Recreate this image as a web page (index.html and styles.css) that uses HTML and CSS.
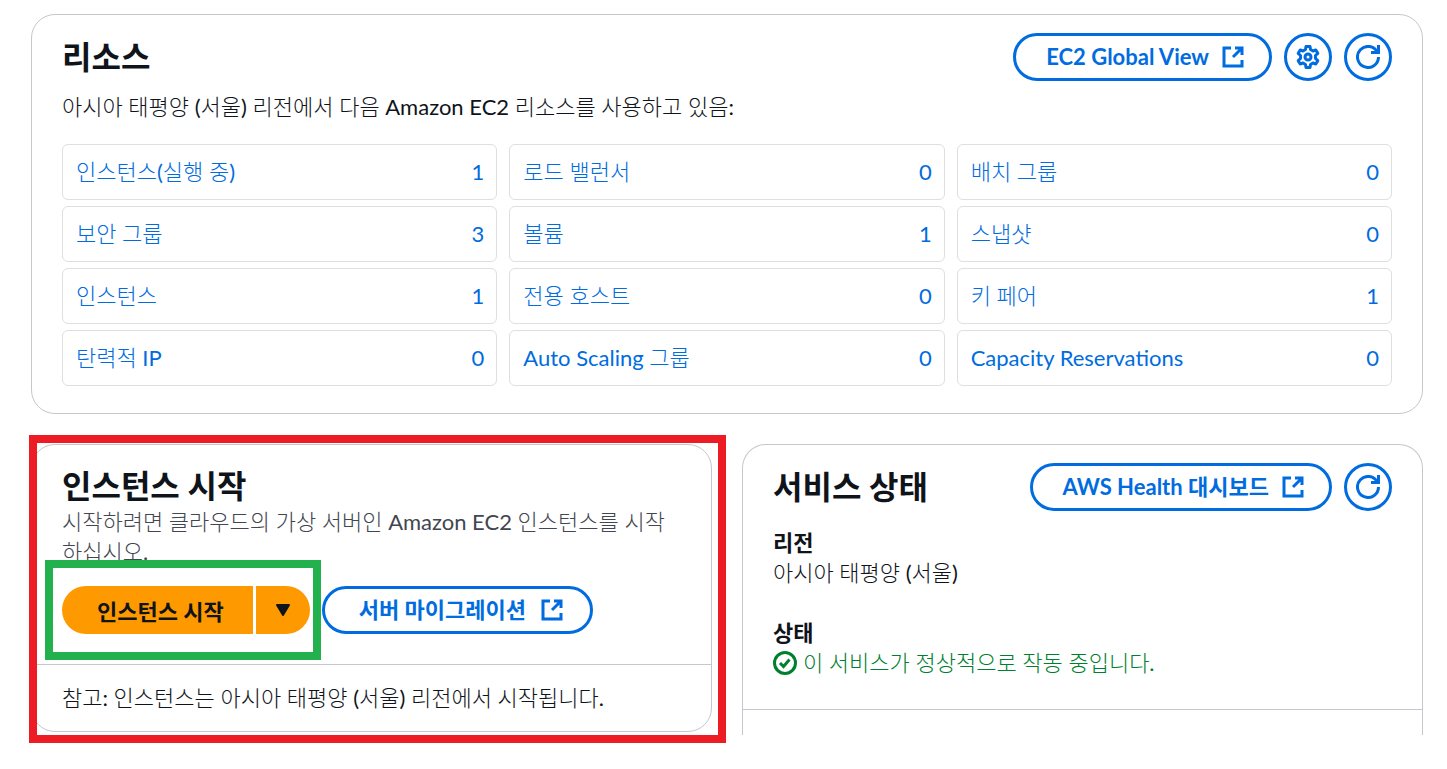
FILE: index.html
```html
<!DOCTYPE html>
<html lang="ko">
<head>
  <meta charset="UTF-8" />
  <meta name="viewport" content="width=device-width, initial-scale=1.0" />
  <title>EC2 대시보드</title>
  <link rel="stylesheet" href="styles.css">
</head>
<body>
  <!-- Shared icons -->
  <svg class="sprite" aria-hidden="true">
    <symbol id="icon-external" viewBox="0 0 24 24">
      <path d="M10 3H3v18h18v-6M14 3h7v7M20.500 3.500L12 12" />
    </symbol>
    <symbol id="icon-refresh" viewBox="0 0 24 24">
      <path d="M22.500 12A10.500 10.500 0 1 1 21.500 7.500M22.500 0v7.500H15" />
    </symbol>
    <symbol id="icon-gear" viewBox="0 0 24 24">
      <path stroke-linejoin="round" d="M9.500 4.500L10 1.500h4L14.500 4.500l2.500 1.500 2.800-1 2 3.300L19.500 10.500v3l2.300 2.200-2 3.300-2.800-1-2.500 1.500-.5 3h-4l-.5-3L7 18l-2.800 1-2-3.300L4.500 13.500v-3L2.200 8.300l2-3.300L7 6z" />
      <circle cx="12" cy="12" r="3" />
    </symbol>
    <symbol id="icon-check" viewBox="0 0 24 24">
      <circle cx="12" cy="12" r="10.500" />
      <path d="M7 12l3.500 3.500L16.500 8.500" />
    </symbol>
  </svg>

  <main class="dashboard">
    <section class="card resources">
      <div class="card-header">
        <h2>리소스</h2>
        <div class="actions">
          <a class="btn" href="#">EC2 Global View <svg class="icon"><use href="#icon-external" /></svg></a>
          <button class="btn btn-round" aria-label="설정"><svg class="icon"><use href="#icon-gear" /></svg></button>
          <button class="btn btn-round" aria-label="새로 고침"><svg class="icon"><use href="#icon-refresh" /></svg></button>
        </div>
      </div>
      <p class="intro">아시아 태평양 (서울) 리전에서 다음 Amazon EC2 리소스를 사용하고 있음:</p>
      <div class="resource-grid">
        <a class="resource" href="#"><span>인스턴스(실행 중)</span><span>1</span></a>
        <a class="resource" href="#"><span>로드 밸런서</span><span>0</span></a>
        <a class="resource" href="#"><span>배치 그룹</span><span>0</span></a>
        <a class="resource" href="#"><span>보안 그룹</span><span>3</span></a>
        <a class="resource" href="#"><span>볼륨</span><span>1</span></a>
        <a class="resource" href="#"><span>스냅샷</span><span>0</span></a>
        <a class="resource" href="#"><span>인스턴스</span><span>1</span></a>
        <a class="resource" href="#"><span>전용 호스트</span><span>0</span></a>
        <a class="resource" href="#"><span>키 페어</span><span>1</span></a>
        <a class="resource" href="#"><span>탄력적 IP</span><span>0</span></a>
        <a class="resource" href="#"><span>Auto Scaling 그룹</span><span>0</span></a>
        <a class="resource" href="#"><span>Capacity Reservations</span><span>0</span></a>
      </div>
    </section>

    <div class="columns">
      <section class="card launch">
        <div class="launch-body">
          <h2>인스턴스 시작</h2>
          <p class="description">시작하려면 클라우드의 가상 서버인 Amazon EC2 인스턴스를 시작하십시오.</p>
          <div class="actions">
            <div class="split-button">
              <button class="btn-primary">인스턴스 시작</button>
              <button class="btn-primary btn-caret" aria-label="추가 옵션">
                <svg class="caret" viewBox="0 0 16 12"><path d="M2 1h12L8 11z" /></svg>
              </button>
            </div>
            <a class="btn btn-wide" href="#">서버 마이그레이션 <svg class="icon"><use href="#icon-external" /></svg></a>
          </div>
        </div>
        <p class="card-footer">참고: 인스턴스는 아시아 태평양 (서울) 리전에서 시작됩니다.</p>
      </section>

      <section class="card health">
        <div class="card-header">
          <h2>서비스 상태</h2>
          <div class="actions">
            <a class="btn" href="#">AWS Health 대시보드 <svg class="icon"><use href="#icon-external" /></svg></a>
            <button class="btn btn-round" aria-label="새로 고침"><svg class="icon"><use href="#icon-refresh" /></svg></button>
          </div>
        </div>
        <dl class="status-list">
          <div>
            <dt>리전</dt>
            <dd>아시아 태평양 (서울)</dd>
          </div>
          <div>
            <dt>상태</dt>
            <dd class="status-ok"><svg class="icon"><use href="#icon-check" /></svg>이 서비스가 정상적으로 작동 중입니다.</dd>
          </div>
        </dl>
        <div class="health-footer"></div>
      </section>
    </div>
  </main>
</body>
</html>
```

FILE: styles.css
```css
* {
  box-sizing: border-box;
}
body {
  margin: 0;
  padding: 14px 24px 34px 31px;
  background: #fff;
  color: #0f141a;
  font-family: Lato, "Noto Sans CJK KR Light", "Noto Sans CJK KR", sans-serif;
  font-size: 22px;
  line-height: 30px;
}
h2, p, dl, dd {
  margin: 0;
}
h2, dt, .btn, .btn-primary {
  font-family: Lato, "Noto Sans CJK KR", sans-serif;
  font-size: 22px;
  font-weight: bold;
}
h2 {
  font-size: 32px;
  line-height: 38px;
}
a {
  text-decoration: none;
}
.sprite {
  display: none;
}
.dashboard {
  display: flex;
  flex-direction: column;
  gap: 30px;
}
.card {
  border: 1px solid #c6c6cd;
  border-radius: 24px;
}
.card-header {
  display: flex;
  align-items: center;
  justify-content: space-between;
}
.actions {
  display: flex;
  align-items: center;
  gap: 12px;
}

/* Buttons */
.btn {
  display: flex;
  align-items: center;
  justify-content: center;
  gap: 12px;
  height: 48px;
  padding: 0 24px 0 30px;
  border: 3px solid #006ce0;
  border-radius: 24px;
  background: #fff;
  color: #006ce0;
  white-space: nowrap;
}
.btn-wide {
  gap: 14px;
  padding: 0 26px 0 34px;
}
.btn-round {
  width: 48px;
  padding: 0;
}
.icon {
  flex: none;
  width: 24px;
  height: 24px;
  fill: none;
  stroke: currentColor;
  stroke-width: 3px;
}
.btn-primary {
  height: 48px;
  padding: 0 29px 0 35px;
  border: none;
  border-radius: 24px 0 0 24px;
  background: #ff9900;
  color: #0f141a;
}
.btn-caret {
  width: 54px;
  padding: 0;
  border-radius: 0 24px 24px 0;
}
.caret {
  display: block;
  width: 16px;
  height: 12px;
  margin: 0 auto;
  fill: #0f141a;
  stroke: #0f141a;
  stroke-width: 2px;
  stroke-linejoin: round;
}

/* Resources */
.resources {
  padding: 18px 30px 27px;
}
.intro {
  margin: 11px 0 22px;
}
.resource-grid {
  display: grid;
  grid-template-columns: repeat(3, 1fr);
  gap: 6px 12px;
}
.resource {
  display: flex;
  align-items: center;
  justify-content: space-between;
  height: 56px;
  padding: 0 12px 0 13px;
  border: 1px solid #dedee3;
  border-radius: 6px;
  color: #006ce0;
}

/* Launch and health cards */
.columns {
  display: grid;
  grid-template-columns: 1fr 1fr;
  align-items: start;
  gap: 30px;
}
.launch {
  position: relative;
}
.launch-body {
  padding: 22px 30px 30px;
}
.description {
  margin: 2px 0 19px;
  color: #424650;
  word-break: break-all;
}
.card-footer {
  padding: 18px 30px;
  border-top: 1px solid #c6c6cd;
}
.split-button {
  position: relative;
  display: flex;
  gap: 3px;
}
.health {
  border-bottom: none;
  border-radius: 24px 24px 0 0;
}
.health .card-header {
  padding: 18px 30px 0;
}
.status-list {
  display: flex;
  flex-direction: column;
  gap: 30px;
  padding: 17px 30px 31px;
}
.status-ok {
  display: flex;
  align-items: center;
  gap: 6px;
  color: #00802f;
}
.health-footer {
  height: 26px;
  border-top: 1px solid #c6c6cd;
}

/* Highlight frames drawn over the launch card */
.launch::after,
.split-button::after {
  content: "";
  position: absolute;
  pointer-events: none;
}
.launch::after {
  inset: -10px -15px -12px -3px;
  border: 8px solid #ed1c24;
}
.split-button::after {
  inset: -26px -11px -26px -17px;
  border: 8px solid #22b14c;
}
```
